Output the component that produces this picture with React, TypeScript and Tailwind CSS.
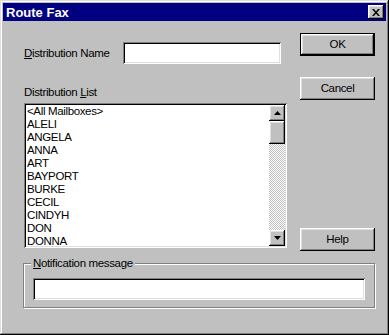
import React from 'react';

const raised =
  'bg-[#c0c0c0] shadow-[inset_-1px_-1px_0_#000,inset_1px_1px_0_#fff,inset_-2px_-2px_0_#808080,inset_2px_2px_0_#dfdfdf]';
const sunken =
  'bg-white shadow-[inset_1px_1px_0_#808080,inset_-1px_-1px_0_#fff,inset_2px_2px_0_#000,inset_-2px_-2px_0_#dfdfdf]';

const names = [
  '<All Mailboxes>',
  'ALELI',
  'ANGELA',
  'ANNA',
  'ART',
  'BAYPORT',
  'BURKE',
  'CECIL',
  'CINDYH',
  'DON',
  'DONNA',
];

function Button({ label, primary }: { label: string; primary?: boolean }) {
  if (primary) {
    return (
      <div className="h-[23px] w-[75px] border border-black">
        <div className={`${raised} flex h-full w-full items-center justify-center`}>{label}</div>
      </div>
    );
  }
  return <div className={`${raised} flex h-[23px] w-[75px] items-center justify-center`}>{label}</div>;
}

function Arrow({ up }: { up?: boolean }) {
  return (
    <div className={`${raised} flex h-[16px] w-[16px] items-center justify-center`}>
      <svg width="7" height="4" viewBox="0 0 7 4">
        <path d={up ? 'M3.5 0 L7 4 L0 4 Z' : 'M0 0 L7 0 L3.5 4 Z'} fill="#000" />
      </svg>
    </div>
  );
}

export default function App() {
  return (
    <div
      className="flex h-[335px] w-[389px] flex-col bg-[#c0c0c0] p-[3px] text-[11.5px] leading-[13px] tracking-[-0.35px] text-black shadow-[inset_-1px_-1px_0_#000,inset_1px_1px_0_#dfdfdf,inset_-2px_-2px_0_#808080,inset_2px_2px_0_#fff]"
      style={{ fontFamily: '"Liberation Sans", Arial, sans-serif' }}
    >
      <div className="flex h-[18px] items-center justify-between bg-[#000080] pl-[3px] pr-[2px]">
        <span className="text-[13px] font-bold tracking-normal text-white">Route Fax</span>
        <div className={`${raised} flex h-[14px] w-[16px] items-center justify-center`}>
          <svg width="8" height="7" viewBox="0 0 8 7">
            <path d="M0 0h2l2 2.5L6 0h2L5 3.5 8 7H6L4 4.5 2 7H0l3-3.5z" fill="#000" />
          </svg>
        </div>
      </div>

      <div className="flex pl-[21px]">
        <div className="flex w-[263px] flex-col">
          <div className="mt-[21px] flex h-[22px] items-center">
            <span className="w-[99px]">
              <span className="underline">D</span>istribution Name
            </span>
            <div className={`${sunken} h-[22px] w-[158px]`} />
          </div>
          <div className="mt-[22px] h-[13px]">
            Distribution <span className="underline">L</span>ist
          </div>
          <div className={`${sunken} mt-[4px] flex h-[145px] p-[2px]`}>
            <div className="flex-1 pl-[1px]">
              {names.map((n) => (
                <div key={n} className="h-[13px]">
                  {n}
                </div>
              ))}
            </div>
            <div className="flex w-[16px] flex-col">
              <Arrow up />
              <div className={`${raised} h-[23px]`} />
              <div className="flex-1 [background-image:repeating-conic-gradient(#c0c0c0_0_25%,#fff_0_50%)] [background-size:2px_2px]" />
              <Arrow />
            </div>
          </div>
        </div>
        <div className="ml-[13px] flex flex-col">
          <div className="mt-[12px]">
            <Button label="OK" primary />
          </div>
          <div className="mt-[21px]">
            <Button label="Cancel" />
          </div>
          <div className="mt-[128px]">
            <Button label="Help" />
          </div>
        </div>
      </div>

      <div className="relative ml-[20px] mt-[12px] w-[352px] border border-[#808080] px-[9px] pb-[7px] pt-[14px] shadow-[1px_1px_0_#fff,inset_1px_1px_0_#fff]">
        <span className="absolute left-[7px] top-[-7px] bg-[#c0c0c0] px-[2px]">
          <span className="underline">N</span>otification message
        </span>
        <div className={`${sunken} h-[22px] w-[332px]`} />
      </div>
    </div>
  );
}
